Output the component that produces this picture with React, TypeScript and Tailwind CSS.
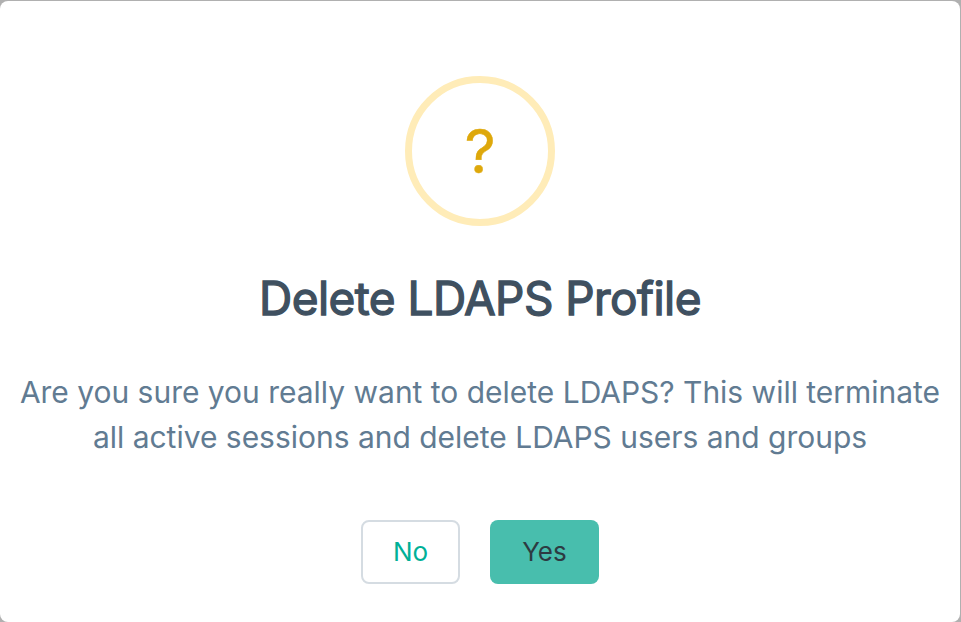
export default function App() {
  return (
    <div className="h-[622px] w-[961px] bg-[#b0b0b0] pt-px pr-px font-[Inter,sans-serif]">
      <div
        role="dialog"
        aria-labelledby="dialog-title"
        className="flex h-[621px] w-[960px] flex-col items-center rounded-lg bg-white"
      >
        <div className="mt-[75px] flex h-[150px] w-[150px] items-center justify-center rounded-full border-[7px] border-[#ffecb8]">
          <span className="text-[61px] leading-none text-[#dea80b] [-webkit-text-stroke:0.4px_#dea80b]">?</span>
        </div>
        <h2
          id="dialog-title"
          className="mt-[42px] text-[46px] leading-[60px] font-normal tracking-[-0.57px] text-[#3f5060] [-webkit-text-stroke:1.3px_#3f5060]"
        >
          Delete LDAPS Profile
        </h2>
        <p className="mt-[42px] text-center text-[29.97px] leading-[45px] whitespace-nowrap text-[#617b92]">
          Are you sure you really want to delete LDAPS? This will terminate
          <br />
          all active sessions and delete LDAPS users and groups
        </p>
        <div className="mt-[60px] flex gap-[30px]">
          <button className="h-16 w-[99px] rounded-lg border-2 border-[#d5dce2] bg-white pb-0.5 text-[26px] text-[#00b097]">
            No
          </button>
          <button className="h-16 w-[109px] rounded-lg bg-[#48bead] pb-0.5 text-[26px] text-[#2d3b42]">
            Yes
          </button>
        </div>
      </div>
    </div>
  );
}
